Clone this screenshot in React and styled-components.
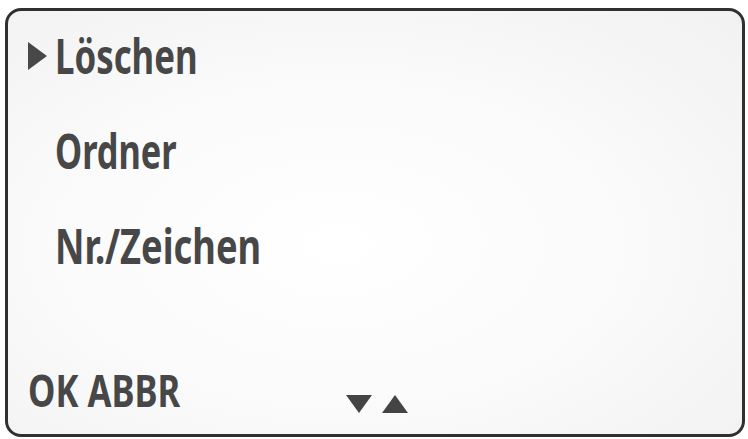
import React from "react";
import styled, { createGlobalStyle } from "styled-components";

const GlobalStyle = createGlobalStyle`
  html, body {
    margin: 0;
    padding: 0;
    background: #ffffff;
  }
  body {
    font-family: "Noto Sans", "Open Sans", "DejaVu Sans Condensed", sans-serif;
  }
`;

const Page = styled.div`
  width: 748px;
  height: 439px;
  padding: 8px 3px 2px 5px;
  box-sizing: border-box;
`;

const Screen = styled.div`
  height: 100%;
  box-sizing: border-box;
  border: 3px solid #303030;
  border-radius: 16px;
  background: radial-gradient(ellipse at 45% 55%, #ffffff 0%, #fbfbfb 45%, #f1f1f1 100%);
  display: flex;
  flex-direction: column;
  justify-content: space-between;
  padding: 20px 20px 22px 20px;
  color: #474747;
`;

const Menu = styled.ul`
  list-style: none;
  margin: 0;
  padding: 0;
  display: flex;
  flex-direction: column;
  gap: 46px;
`;

const Item = styled.li`
  display: flex;
  align-items: center;
  height: 49px;
  font-size: 49px;
  line-height: 49px;
  font-weight: 700;
`;

/* the display font is a condensed face; squeeze the installed sans to match */
const Condensed = styled.span`
  display: inline-block;
  white-space: nowrap;
  transform: scaleX(${({ $squeeze }) => $squeeze});
  transform-origin: left center;
`;

const Pointer = styled.span`
  width: 27px;
  flex: none;
  display: flex;
  align-items: center;

  svg {
    visibility: ${({ $active }) => ($active ? "visible" : "hidden")};
  }
`;

const Footer = styled.div`
  display: flex;
  align-items: flex-end;
  height: 45px;
`;

const SoftKey = styled.span`
  font-size: 45px;
  line-height: 45px;
  font-weight: 700;
  width: 318px;
`;

const Arrows = styled.div`
  display: flex;
  gap: 10px;
  margin-bottom: -1px;
`;

const Tri = ({ dir }) => (
  <svg width="26" height="18" viewBox="0 0 26 18">
    {dir === "down" ? (
      <polygon points="0,0 26,0 13,18" fill="#444" />
    ) : (
      <polygon points="0,18 26,18 13,0" fill="#444" />
    )}
  </svg>
);

const items = [
  { label: "Löschen", squeeze: 0.71 },
  { label: "Ordner", squeeze: 0.7 },
  { label: "Nr./Zeichen", squeeze: 0.74 },
];

export default function App() {
  return (
    <>
      <GlobalStyle />
      <Page>
        <Screen>
          <Menu>
            {items.map(({ label, squeeze }, i) => (
              <Item key={label}>
                <Pointer $active={i === 0}>
                  <svg width="19" height="28" viewBox="0 0 19 28">
                    <polygon points="0,0 19,14 0,28" fill="#484848" />
                  </svg>
                </Pointer>
                <Condensed $squeeze={squeeze}>{label}</Condensed>
              </Item>
            ))}
          </Menu>
          <Footer>
            <SoftKey>
              <Condensed $squeeze={0.77}>OK ABBR</Condensed>
            </SoftKey>
            <Arrows>
              <Tri dir="down" />
              <Tri dir="up" />
            </Arrows>
          </Footer>
        </Screen>
      </Page>
    </>
  );
}
